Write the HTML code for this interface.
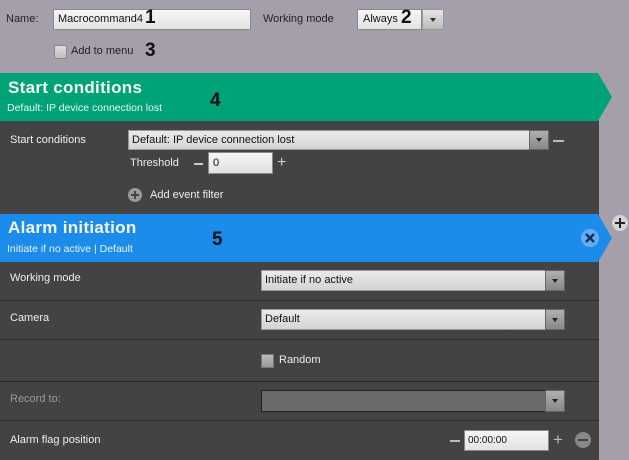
<!DOCTYPE html>
<html><head><meta charset="utf-8"><style>
*{margin:0;padding:0;box-sizing:border-box}
body{width:629px;height:460px;background:#a49fab;font-family:"Liberation Sans",sans-serif;font-size:11px;position:relative;overflow:hidden;color:#fff}
.a{position:absolute}
.lbl{color:#222;font-size:11px}
.inp{background:linear-gradient(#f6f6f6,#e2e2e2);border:1px solid #888;color:#111;font-size:11px;padding-left:4px;line-height:18px}
.dd{background:linear-gradient(#eaeaea,#d4d4d4);border:1px solid #999;color:#111;padding-left:3px}
.btn{background:linear-gradient(#b0b0b0,#888);border:1px solid #666}
.btn:after{content:"";position:absolute;left:50%;top:50%;margin:-2px 0 0 -3px;border:3px solid transparent;border-top:4px solid #222;border-bottom:0}
.num{color:#111;font-weight:bold;font-size:19px;font-family:"Liberation Sans",sans-serif}
.wt{color:#eee;font-size:11px}
.hr{position:absolute;left:0;width:599px;height:1px;background:#2b2b2c}
</style></head><body>
<div class="a lbl" style="left:6px;top:13px">Name:</div>
<div class="a inp" style="left:53px;top:9px;width:198px;height:21px;line-height:19px">Macrocommand4</div>
<div class="a num" style="left:145px;top:7px">1</div>
<div class="a lbl" style="left:263px;top:13px">Working mode</div>
<div class="a inp" style="left:357px;top:9px;width:65px;height:21px;line-height:19px;padding-left:5px">Always</div>
<div class="a num" style="left:401px;top:7px">2</div>
<div class="a" style="left:422px;top:9px;width:22px;height:21px;background:linear-gradient(#e6e6e6,#bbb);border:1px solid #999"></div>
<div class="a" style="left:430px;top:18px;border:3px solid transparent;border-top:4px solid #333;border-bottom:0"></div>
<div class="a" style="left:54px;top:45px;width:13px;height:14px;background:linear-gradient(#ddd,#c0c0c0);border:1px solid #888;border-radius:2px"></div>
<div class="a lbl" style="left:71px;top:45px">Add to menu</div>
<div class="a num" style="left:145px;top:40px">3</div>

<div class="a" style="left:0;top:120px;width:599px;height:340px;background:#434244"></div>
<svg class="a" style="left:0;top:73px" width="629" height="190">
<polygon points="0,0 598,0 612,24 598,48 0,48" fill="#00a278"/>
<polygon points="0,141 598,141 612,165 598,189 0,189" fill="#1c8cea"/>
<circle cx="620" cy="150" r="8" fill="#d4d4d4"/>
<path d="M615 150h10M620 145v10" stroke="#222" stroke-width="2"/>
<circle cx="590" cy="165" r="9" fill="#64acf2"/>
<path d="M586 161l8 8M594 161l-8 8" stroke="#12325a" stroke-width="2.4"/>
</svg>
<div class="a" style="left:8px;top:78px;font-size:17px;font-weight:bold;color:#f4f4f4;letter-spacing:0.3px">Start conditions</div>
<div class="a" style="left:7px;top:102px;font-size:10.5px;color:#e8f6f0">Default: IP device connection lost</div>
<div class="a num" style="left:210px;top:90px">4</div>

<div class="wt a" style="left:10px;top:134px">Start conditions</div>
<div class="a dd" style="left:128px;top:130px;width:402px;height:20px;line-height:18px">Default: IP device connection lost</div>
<div class="a btn" style="left:529px;top:130px;width:20px;height:20px"></div>
<div class="a" style="left:553px;top:140px;width:11px;height:2px;background:#bbb"></div>
<div class="wt a" style="left:130px;top:157px">Threshold</div>
<div class="a" style="left:194px;top:163px;width:9px;height:2px;background:#ccc"></div>
<div class="a inp" style="left:208px;top:152px;width:65px;height:22px;line-height:20px">0</div>
<div class="a" style="left:277px;top:157px;color:#ccc;font-size:16px;line-height:12px">+</div>
<div class="a" style="left:128px;top:188px;width:14px;height:14px;border-radius:50%;background:#999"></div>
<div class="a" style="left:131px;top:194px;width:8px;height:2px;background:#444"></div>
<div class="a" style="left:134px;top:191px;width:2px;height:8px;background:#444"></div>
<div class="wt a" style="left:150px;top:189px">Add event filter</div>

<div class="a" style="left:8px;top:218px;font-size:17px;font-weight:bold;color:#f4f4f4;letter-spacing:0.3px">Alarm initiation</div>
<div class="a" style="left:7px;top:243px;font-size:10.5px;color:#e8f2fc">Initiate if no active | Default</div>
<div class="a num" style="left:212px;top:229px">5</div>

<div class="wt a" style="left:10px;top:272px">Working mode</div>
<div class="a dd" style="left:261px;top:270px;width:285px;height:21px;line-height:19px">Initiate if no active</div>
<div class="a btn" style="left:545px;top:270px;width:20px;height:21px"></div>
<div class="hr" style="top:300px"></div>
<div class="wt a" style="left:10px;top:312px">Camera</div>
<div class="a dd" style="left:261px;top:309px;width:285px;height:21px;line-height:19px">Default</div>
<div class="a btn" style="left:545px;top:309px;width:20px;height:21px"></div>
<div class="hr" style="top:339px"></div>
<div class="a" style="left:261px;top:354px;width:13px;height:14px;background:linear-gradient(#bbb,#999);border:1px solid #777"></div>
<div class="wt a" style="left:279px;top:354px">Random</div>
<div class="hr" style="top:381px"></div>
<div class="a" style="left:10px;top:393px;color:#9a9a9a">Record to:</div>
<div class="a" style="left:261px;top:390px;width:285px;height:22px;background:#6a6a6a;border:1px solid #222"></div>
<div class="a btn" style="left:545px;top:390px;width:20px;height:22px"></div>
<div class="hr" style="top:420px"></div>
<div class="wt a" style="left:10px;top:434px">Alarm flag position</div>
<div class="a" style="left:450px;top:440px;width:10px;height:2px;background:#bbb"></div>
<div class="a inp" style="left:464px;top:430px;width:85px;height:21px;line-height:19px;padding-left:3px;font-size:10px">00:00:00</div>
<div class="a" style="left:553px;top:433px;color:#bbb;font-size:17px;line-height:14px">+</div>
<div class="a" style="left:575px;top:432px;width:16px;height:16px;border-radius:50%;background:#888"></div>
<div class="a" style="left:578px;top:439px;width:10px;height:2px;background:#444"></div>
</body></html>
